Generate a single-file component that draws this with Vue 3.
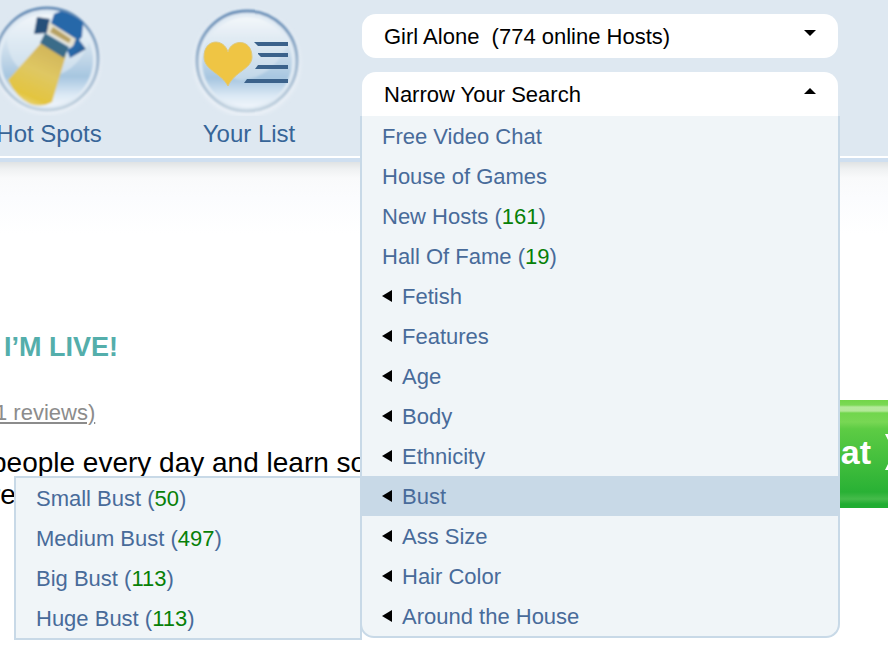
<script setup>
import { ref } from 'vue'

const category = ref('girl-alone')
const menuOpen = ref(true)
const active = ref('Bust')

const links = [
  { label: 'Free Video Chat' },
  { label: 'House of Games' },
  { label: 'New Hosts', count: 161 },
  { label: 'Hall Of Fame', count: 19 },
]

const groups = [
  { label: 'Fetish' },
  { label: 'Features' },
  { label: 'Age' },
  { label: 'Body' },
  { label: 'Ethnicity' },
  {
    label: 'Bust',
    children: [
      { label: 'Small Bust', count: 50 },
      { label: 'Medium Bust', count: 497 },
      { label: 'Big Bust', count: 113 },
      { label: 'Huge Bust', count: 113 },
    ],
  },
  { label: 'Ass Size' },
  { label: 'Hair Color' },
  { label: 'Around the House' },
]
</script>

<template>
  <div class="page">
    <header class="header">
      <nav class="nav">
        <a class="nav-item" href="#spots">
          <svg class="nav-icon" viewBox="0 0 120 116" aria-hidden="true">
            <defs>
              <linearGradient id="glass" x1="0" y1="0" x2="0" y2="1">
                <stop offset="0" stop-color="#ffffff" />
                <stop offset="0.25" stop-color="#dce8f2" />
                <stop offset="0.5" stop-color="#bfd5e7" />
                <stop offset="0.68" stop-color="#a6c6e0" />
                <stop offset="0.88" stop-color="#dce9f5" />
                <stop offset="1" stop-color="#eff5fb" />
              </linearGradient>
              <linearGradient id="rim" x1="0" y1="0" x2="0" y2="1">
                <stop offset="0" stop-color="#6089b4" />
                <stop offset="0.45" stop-color="#93aec9" />
                <stop offset="1" stop-color="#c2d2df" />
              </linearGradient>
              <linearGradient id="beam" x1="0.7" y1="0" x2="0.3" y2="1">
                <stop offset="0" stop-color="#cfb258" />
                <stop offset="0.45" stop-color="#dfc763" />
                <stop offset="0.85" stop-color="#e3c53f" />
                <stop offset="1" stop-color="#ead989" />
              </linearGradient>
              <linearGradient id="lamp" x1="0" y1="0" x2="1" y2="1">
                <stop offset="0" stop-color="#2f6495" />
                <stop offset="0.5" stop-color="#2668aa" />
                <stop offset="1" stop-color="#285078" />
              </linearGradient>
              <filter id="soft" x="-10%" y="-10%" width="120%" height="120%">
                <feGaussianBlur stdDeviation="0.8" />
              </filter>
              <filter id="halo" x="-10%" y="-10%" width="120%" height="120%">
                <feGaussianBlur stdDeviation="2" />
              </filter>
            </defs>
            <circle cx="59" cy="61" r="53" fill="#edf2f8" filter="url(#halo)" />
            <g filter="url(#soft)">
              <circle cx="59" cy="59" r="51" fill="#e1ebf4" stroke="url(#rim)" stroke-width="3" />
              <circle cx="59" cy="60" r="46" fill="url(#glass)" />
              <path d="M19 38Q20 72 54 78Q89 76 102 40Q91 13 60 13Q28 15 19 38Z" fill="#e5eef5" opacity="0.55" />
              <path d="M54 42L78 55L64 102Q54 108 42 104Q28 97 20 80Z" fill="url(#beam)" />
              <path d="M66 14L73 11Q85 14 95 22L94 37L88 43L62 26Z" fill="#2768a9" />
              <path d="M49 17L62 19L59 33L46 34Z" fill="#284f79" />
              <path d="M61 22L88 39L84 47L59 33Z" fill="#e7e2cf" />
              <path d="M65 27L83 39L81 43L62 32Z" fill="#b6a164" />
              <path d="M57 33L81 47L76 58L52 43Z" fill="#3b6c89" />
              <path d="M89 37L98 49L82 58L79 50L85 46Z" fill="url(#lamp)" />
            </g>
          </svg>
          <span class="nav-label">Hot Spots</span>
        </a>
        <a class="nav-item" href="#list">
          <svg class="nav-icon" viewBox="0 0 120 116" aria-hidden="true">
            <circle cx="59" cy="63" r="53" fill="#edf2f8" filter="url(#halo)" />
            <g filter="url(#soft)">
              <circle cx="59" cy="61" r="50" fill="#e1ebf4" stroke="url(#rim)" stroke-width="3" />
              <circle cx="59" cy="62" r="45" fill="url(#glass)" />
              <path d="M20 40Q23 76 53 80Q84 78 100 44Q89 15 59 15Q28 17 20 40Z" fill="#e5eef5" opacity="0.45" />
            </g>
            <path d="M66 42H100V46H70ZM70 53H100V57H73L70 54ZM70 65H100V69H67ZM59 79H100V83H56Z" fill="#3b628b" />
            <path
              d="M40 52C43 39 64 38 64 57C64 69 47 71 40 86C33 73 16 70 16 57C16 38 36 38 40 52Z"
              fill="#efc544"
              stroke="#dfc97e"
              stroke-width="1"
            />
          </svg>
          <span class="nav-label">Your List</span>
        </a>
      </nav>

      <div class="search">
        <div class="picker">
          <select v-model="category" class="field" aria-label="Category">
            <option value="girl-alone">Girl Alone&nbsp; (774 online Hosts)</option>
          </select>
          <svg class="caret" viewBox="0 0 12 6" aria-hidden="true"><path d="M0 0H12L6 6Z" /></svg>
        </div>

        <div class="picker">
          <button
            type="button"
            class="field"
            :class="{ open: menuOpen }"
            :aria-expanded="menuOpen"
            @click="menuOpen = !menuOpen"
          >
            Narrow Your Search
          </button>
          <svg class="caret" viewBox="0 0 12 6" aria-hidden="true"><path d="M0 6H12L6 0Z" /></svg>

          <ul v-if="menuOpen" class="menu">
            <li v-for="item in links" :key="item.label">
              <a class="row" href="#">
                {{ item.label }}<template v-if="item.count"> (<span class="count">{{ item.count }}</span>)</template>
              </a>
            </li>
            <li
              v-for="group in groups"
              :key="group.label"
              class="group"
              :class="{ active: group.label === active }"
            >
              <a class="row" href="#" @click.prevent="active = group.label">
                <svg class="arrow" viewBox="0 0 10 12" aria-hidden="true"><path d="M0 5L10 -1V11Z" /></svg>
                {{ group.label }}
              </a>
              <ul v-if="group.children && group.label === active" class="submenu">
                <li v-for="child in group.children" :key="child.label">
                  <a class="row" href="#">{{ child.label }} (<span class="count">{{ child.count }}</span>)</a>
                </li>
              </ul>
            </li>
          </ul>
        </div>
      </div>
    </header>

    <main class="content">
      <section class="profile">
        <h1 class="live">I’M LIVE!</h1>
        <a class="reviews" href="#reviews">1 reviews)</a>
        <p class="about">people every day and learn so<br />re</p>
      </section>
      <button type="button" class="chat">
        Chat
        <svg class="chevron" viewBox="0 0 18 36" aria-hidden="true"><path d="M0 0H7L18 18L7 36H0L9 18Z" /></svg>
      </button>
    </main>
  </div>
</template>

<style>
body {
  margin: 0;
  background: #fff;
}
</style>

<style scoped>
.page {
  min-height: 100vh;
  overflow: hidden;
  font-family: "Liberation Sans", Arial, sans-serif;
  font-size: 22px;
  color: #000;
}

.header {
  display: flex;
  justify-content: space-between;
  height: 156px;
  background: #dee8f1;
  border-bottom: 2px solid #fff;
}

.nav {
  display: flex;
  margin-left: -52px;
}

.nav-item {
  display: flex;
  flex-direction: column;
  align-items: center;
  width: 200px;
  font-size: 24px;
  line-height: 36px;
  color: #376598;
  text-decoration: none;
}

.nav-icon {
  width: 120px;
  height: 116px;
}

.nav-label {
  padding-left: 2px;
}

.search {
  display: flex;
  flex: 1;
  flex-direction: column;
  gap: 14px;
  margin: 14px 50px 0 14px;
}

.picker {
  position: relative;
}

.field {
  display: block;
  box-sizing: border-box;
  width: 100%;
  height: 44px;
  padding: 0 22px;
  border: 0;
  border-radius: 14px;
  background: #fff;
  color: #000;
  font: inherit;
  text-align: left;
  appearance: none;
}

.field.open {
  padding-top: 2px;
  border-radius: 14px 14px 0 0;
}

.caret {
  position: absolute;
  top: 16px;
  right: 22px;
  width: 12px;
  height: 6px;
  pointer-events: none;
}

.menu,
.submenu {
  box-sizing: border-box;
  margin: 0;
  padding: 0;
  list-style: none;
  background: #f0f5f8;
  border: 2px solid #c8d9e7;
}

.menu {
  position: absolute;
  z-index: 2;
  top: 100%;
  right: -2px;
  left: -2px;
  border-top: 0;
  border-radius: 0 0 14px 14px;
}

.group {
  position: relative;
}

.active {
  background: #c8d9e7;
}

.submenu {
  position: absolute;
  top: 0;
  right: 100%;
  width: 348px;
}

.row {
  display: block;
  padding: 2px 20px 0;
  line-height: 38px;
  color: #486b9a;
  text-decoration: none;
}

.group > .row {
  display: flex;
  align-items: center;
  gap: 10px;
}

.arrow {
  width: 10px;
  height: 12px;
  overflow: visible;
}

.count {
  color: #078007;
}

.content {
  display: flex;
  justify-content: space-between;
  border-top: 4px solid #cfdff0;
  background: linear-gradient(#e0e3e4 0, #eff1f2 7px, #f9fafb 16px, #fbfcfe 36px, #fff 72px);
}

.profile {
  padding-top: 168px;
}

.live {
  margin: 0 0 32px 4px;
  font-size: 27px;
  line-height: 34px;
  color: #54aeab;
}

.reviews {
  display: block;
  margin: 0 0 18px -5px;
  padding-top: 1px;
  line-height: 32px;
  color: #8c8c8c;
  text-underline-offset: 2px;
}

.about {
  margin: 0 0 0 -9px;
  font-size: 28px;
  line-height: 32px;
}

.chat {
  display: flex;
  align-items: center;
  gap: 14px;
  height: 108px;
  margin: 238px -60px 0 0;
  padding: 0 45px 4px 88px;
  border: 0;
  background: linear-gradient(
    #72d548 0,
    #7bd955 5px,
    #b4e99a 7px,
    #b2e898 11px,
    #71d64d 13px,
    #78d754 22px,
    #5dcc44 29px,
    #29b135 92px,
    #45bb4a 99px,
    #20ad31 104px,
    #20ad31 108px
  );
  color: #fff;
  font: bold 34px "Liberation Sans", Arial, sans-serif;
}

.chevron {
  width: 18px;
  height: 36px;
  fill: #fff;
}
</style>
